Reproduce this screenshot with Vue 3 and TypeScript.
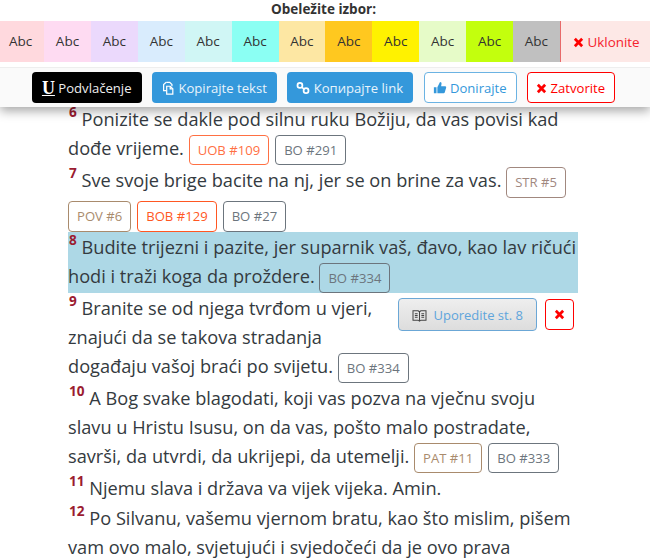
<script setup lang="ts">
interface Tag { label: string; color: string; spaced?: boolean }
interface Verse { n: number; text: string; tags: Tag[]; marked?: boolean; tools?: boolean }

const swatches: string[] = ['#ffd9de', '#fedbf2', '#ebd9fc', '#d9ecfd', '#d0f6f5', '#8bfff3', '#fde7a3', '#ffc81f', '#fff200', '#e6fbc8', '#c3ff0d', '#c0c0c0']

const grey = '#6c757d'
const verses: Verse[] = [
  { n: 6, text: 'Ponizite se dakle pod silnu ruku Božiju, da vas povisi kad dođe vrijeme.', tags: [{ label: 'UOB #109', color: '#ff7043' }, { label: 'BO #291', color: grey }] },
  { n: 7, text: 'Sve svoje brige bacite na nj, jer se on brine za vas.', tags: [{ label: 'STR #5', color: '#a1887f', spaced: true }, { label: 'POV #6', color: '#a98b6d' }, { label: 'BOB #129', color: '#ff5722' }, { label: 'BO #27', color: grey }] },
  { n: 8, text: 'Budite trijezni i pazite, jer suparnik vaš, đavo, kao lav ričući hodi i traži koga da proždere.', tags: [{ label: 'BO #334', color: grey }], marked: true },
  { n: 9, text: 'Branite se od njega tvrđom u vjeri, znajući da se takova stradanja događaju vašoj braći po svijetu.', tags: [{ label: 'BO #334', color: grey }], tools: true },
  { n: 10, text: 'A Bog svake blagodati, koji vas pozva na vječnu svoju slavu u Hristu Isusu, on da vas, pošto malo postradate, savrši, da utvrdi, da ukrijepi, da utemelji.', tags: [{ label: 'PAT #11', color: '#a98b6d' }, { label: 'BO #333', color: grey }] },
  { n: 11, text: 'Njemu slava i država va vijek vijeka. Amin.', tags: [] },
  { n: 12, text: 'Po Silvanu, vašemu vjernom bratu, kao što mislim, pišem vam ovo malo, svjetujući i svjedočeći da je ovo prava', tags: [] },
]
</script>

<template>
  <div class="page">
    <header class="panel">
      <div class="title">Obeležite izbor:</div>
      <div class="swatches">
        <span v-for="c in swatches" :key="c" class="swatch" :style="{ background: c }">Abc</span>
        <button class="remove">
          <svg class="x" viewBox="0 0 12 12"><path d="M2 2l8 8M10 2l-8 8" /></svg>
          Uklonite
        </button>
      </div>
      <div class="actions">
        <button class="btn black"><span class="u">U</span> Podvlačenje</button>
        <button class="btn blue">
          <svg class="ic" viewBox="0 0 16 16" fill="none" stroke="#fff" stroke-width="1.400"><path d="M6 1.500h4l2.500 2.500v2" /><path d="M6 1.500L3 4v7h3" /><path d="M6.500 6h4l3 3v6h-7z" /><path d="M10.500 6v3h3" /></svg>
          Kopirajte tekst
        </button>
        <button class="btn blue">
          <svg class="ic" viewBox="0 0 16 16" fill="none" stroke="#fff" stroke-width="2"><circle cx="4.500" cy="5" r="2.800" /><circle cx="11.500" cy="11" r="2.800" /><path d="M6.500 7l3 2.500" /></svg>
          Копирајте link
        </button>
        <button class="btn outline-blue">
          <svg class="ic" viewBox="0 0 16 16" fill="#3498db"><path d="M1 7h3v7H1zM5 7l3-6c1.500 0 2 1 1.700 2.300L9.300 6H14c1 0 1.300 1 1 1.800l-1.600 5.400c-.2.500-.6.800-1.200.800H5z" /></svg>
          Donirajte
        </button>
        <button class="btn outline-red">
          <svg class="x" viewBox="0 0 12 12"><path d="M2 2l8 8M10 2l-8 8" /></svg>
          Zatvorite
        </button>
      </div>
    </header>

    <main class="verses">
      <p v-for="v in verses" :key="v.n" class="verse" :class="{ marked: v.marked }">
        <span v-if="v.tools" class="tools">
          <button class="compare">
            <svg class="book" viewBox="0 0 16 14" fill="none" stroke="#444" stroke-width="1.100"><path d="M1 2h5.500L8 3l1.500-1H15v10H9.500L8 13l-1.500-1H1z" /><path d="M8 3v10M3 5h3M3 7h3M3 9h3M10 5h3M10 7h3M10 9h3" /></svg>
            Uporedite st. 8
          </button>
          <button class="close-mini"><svg class="x" viewBox="0 0 12 12"><path d="M2 2l8 8M10 2l-8 8" /></svg></button>
        </span>
        <sup class="num">{{ v.n }}</sup>
        {{ v.text }}
        <span v-for="t in v.tags" :key="t.label" class="tag" :class="{ spaced: t.spaced }" :style="{ color: t.color, borderColor: t.color }">{{ t.label }}</span>
      </p>
    </main>
  </div>
</template>

<style>
html, body { margin: 0; background: #fff; }
</style>

<style scoped>
.page {
  width: 650px;
  height: 560px;
  overflow: hidden;
  font-family: "Open Sans", sans-serif;
  color: #343a40;
}
.panel {
  position: relative;
  z-index: 2;
  height: 107px;
  background: #fff;
  box-shadow: 0 4px 10px rgba(0, 0, 0, .35);
}
.title {
  height: 21px;
  line-height: 18px;
  padding-right: 3px;
  text-align: center;
  font-size: 13.500px;
  font-weight: 700;
  color: #333;
}
.swatches {
  display: flex;
  justify-content: center;
  height: 41px;
  margin: 0 -3.500px;
}
.swatch {
  flex: 0 0 46.900px;
  line-height: 41px;
  text-align: center;
  font-size: 13.500px;
  color: #333;
}
.remove {
  flex: 0 0 93px;
  padding: 0;
  border: 0;
  border-left: 1px solid #e86a6a;
  border-right: 1px solid #e86a6a;
  background: #fde8e6;
  color: #f5222d;
  font: 13.400px "Open Sans", sans-serif;
}
.x {
  width: 11px;
  height: 11px;
  fill: none;
  stroke: #f00;
  stroke-width: 3;
  vertical-align: -1px;
}
.actions {
  display: flex;
  justify-content: center;
  align-items: center;
  gap: 10.500px;
  height: 39px;
  margin-top: 5px;
  border-top: 1px solid #eee;
  background: #fafafa;
  padding-right: 3px;
}
.btn {
  height: 31px;
  box-sizing: border-box;
  padding: 0 9px 0 8px;
  border: 1px solid transparent;
  border-radius: 4px;
  font: 13.100px "Open Sans", sans-serif;
  white-space: nowrap;
}
.black { background: #000; color: #eee; padding: 0 9px; }
.u { font: 700 18px "Liberation Serif", serif; text-decoration: underline; color: #fff; line-height: 1; vertical-align: -1px; }
.blue { background: #3498db; color: #e8f4fc; }
.outline-blue { background: #fff; border-color: #6bb3e3; color: #3498db; }
.outline-red { background: #fff; border-color: #f00; color: #f00; }
.ic { width: 14px; height: 14px; vertical-align: -2px; }
.verses {
  width: 510px;
  margin: -3px 0 0 68px;
}
.verse {
  margin: 0;
  font-size: 18.200px;
  line-height: 28.800px;
}
.marked { background: #add8e6; }
.num {
  font-size: 13.600px;
  font-weight: 700;
  line-height: 15px;
  vertical-align: 9px;
  margin-left: 1px;
  color: #9b1c31;
}
.tag {
  display: inline-block;
  box-sizing: border-box;
  height: 30.500px;
  line-height: 28.500px;
  padding: 0 8px;
  margin: 1px 6px 0 0;
  border: 1px solid;
  border-radius: 4px;
  font-size: 13.100px;
}
.spaced { margin-bottom: 2.500px; }
.tools {
  float: right;
  display: flex;
  align-items: center;
  gap: 8px;
  margin: 5px 4px 0 24px;
}
.compare {
  height: 33px;
  width: 139px;
  padding: 0;
  border: 1px solid #6ba7d6;
  border-radius: 4px;
  background: linear-gradient(#eee, #ddd);
  color: #5fa5dc;
  font: 13px "Open Sans", sans-serif;
}
.book { width: 15px; height: 13px; vertical-align: -2px; margin-right: 3px; }
.close-mini {
  width: 29px;
  height: 31px;
  padding: 0;
  border: 1px solid #f00;
  border-radius: 4px;
  background: #fff;
}
</style>
